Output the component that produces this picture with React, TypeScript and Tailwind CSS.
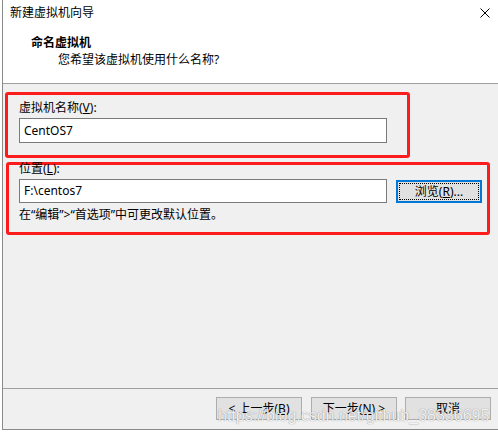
import React from 'react';

const Btn: React.FC<{ children: React.ReactNode; className?: string }> = ({ children, className = '' }) => (
  <div
    className={`h-[23px] w-[86px] flex items-center justify-center bg-[#e1e1e1] border border-[#adadad] text-[12px] leading-[16px] text-black ${className}`}
  >
    {children}
  </div>
);

const App: React.FC = () => {
  return (
    <div
      className="relative w-[498px] h-[433px] bg-white overflow-hidden text-black"
      style={{ fontFamily: '"Noto Sans", "Noto Sans CJK SC", sans-serif' }}
    >
      <div className="ml-[2px] w-[496px] h-[430px] border-l border-b border-[#8a8a8a] flex flex-col">
        {/* title + header */}
        <div className="h-[84px] bg-white border-b border-[#a0a0a0]">
          <div className="flex justify-between items-center pl-[7px] pr-[8px] pt-[5px] h-[21px]">
            <span className="text-[12px] leading-[16px]">新建虚拟机向导</span>
            <svg width="10" height="10" viewBox="0 0 10 10" className="mt-[-1px]">
              <path d="M0.5 0.5 L9.5 9.5 M9.5 0.5 L0.5 9.5" stroke="#000" strokeWidth="1" />
            </svg>
          </div>
          <div className="pl-[28px] mt-[14px] text-[12px] leading-[16px] font-bold">命名虚拟机</div>
          <div className="pl-[55px] mt-[1px] text-[12px] leading-[16px]">您希望该虚拟机使用什么名称?</div>
        </div>

        {/* body */}
        <div className="flex-1 bg-[#f0f0f0]">
          <div className="mt-[8px] ml-[2px] w-[405px] h-[66px] border-[3px] border-[#fd1c1c] rounded-[3px] pl-[11px] pt-[5px]">
            <div className="text-[12px] leading-[16px]">
              虚拟机名称(<span className="underline">V</span>):
            </div>
            <div className="mt-[2px] w-[368px] h-[25px] bg-white border border-[#7a7a7a] flex items-center pl-[4px] text-[12px]">
              CentOS7
            </div>
          </div>

          <div className="mt-[4px] ml-[3px] w-[484px] h-[73px] border-[3px] border-[#fd1c1c] rounded-[3px] pl-[10px]">
            <div className="-mt-[4px] text-[12px] leading-[16px]">
              位置(<span className="underline">L</span>):
            </div>
            <div className="mt-[2px] flex items-start">
              <div className="w-[368px] h-[24px] bg-white border border-[#7a7a7a] flex items-center pl-[4px] text-[12px]">
                F:\centos7
              </div>
              <div className="ml-[9px] mt-[1px] w-[86px] h-[23px] border-2 border-[#0078d7] bg-[#e1e1e1] p-[1px]">
                <div className="w-full h-full border border-dotted border-black flex items-center justify-center text-[12px] leading-[16px]">
                  浏览(<span className="underline">R</span>)...
                </div>
              </div>
            </div>
            <div className="mt-[4px] text-[12px] leading-[16px]">在“编辑”&gt;“首选项”中可更改默认位置。</div>
          </div>
        </div>

        {/* footer */}
        <div className="h-[41px] border-t border-[#a0a0a0] bg-[#f0f0f0] flex justify-end items-start pt-[8px] pr-[7px]">
          <Btn>&lt; 上一步(<span className="underline">B</span>)</Btn>
          <Btn className="ml-[9px]">下一步(<span className="underline">N</span>) &gt;</Btn>
          <Btn className="ml-[8px]">取消</Btn>
        </div>
      </div>

      {/* watermark */}
      <div
        className="absolute left-[218px] top-[404px] text-[16px] text-white/90 whitespace-nowrap [text-shadow:0_0_1px_rgba(0,0,0,0.55)]"
        style={{ fontFamily: '"Liberation Sans", Arial, sans-serif' }}
      >
        https://blog.csdn.net/github_38336695
      </div>
    </div>
  );
};

export default App;
